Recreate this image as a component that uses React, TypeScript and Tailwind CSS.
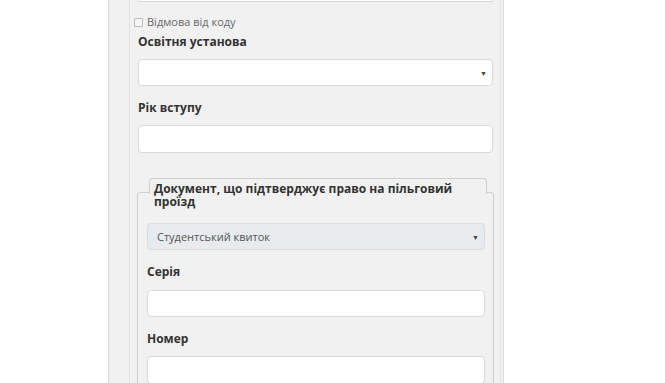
import { useState } from "react";

const font = { fontFamily: '"Open Sans", "Noto Sans", sans-serif' };

function Arrow() {
  return <span className="pointer-events-none absolute right-[5px] top-[10px] text-[7px] leading-none text-[#444]">▼</span>;
}

export default function App() {
  const [noCode, setNoCode] = useState(false);

  return (
    <div className="h-[383px] w-[665px] overflow-hidden bg-white" style={font}>
      <div className="ml-[108px] h-full w-[396px] border-x border-[#dcdcdc] bg-[#f1f1f1]">
        <div className="ml-[20px] h-full w-[372px] border-x border-[#e2e2e2] pl-[8px] pr-[7px]">
          {/* bottom edge of the previous field */}
          <div className="h-[2px] w-[355px] rounded-b border-x border-b border-[#d6d6d6] bg-white" />

          <label className="-ml-[4px] mt-[15px] flex h-[11px] items-center gap-[4px] text-[11px] text-[#6a6a6a]">
            <input
              type="checkbox"
              checked={noCode}
              onChange={(e) => setNoCode(e.target.checked)}
              className="h-[9px] w-[9px] appearance-none rounded-[1px] border border-[#bdbdbd] bg-[#f4f4f4]"
            />
            Відмова від коду
          </label>

          <div className="mt-[5px] h-[18px] text-[12px] font-bold leading-[18px] text-[#333]">Освітня установа</div>
          <div className="relative mt-[8px] h-[27px] w-[355px] rounded border border-[#dadada] bg-white">
            <Arrow />
          </div>

          <div className="mt-[13px] h-[18px] text-[12px] font-bold leading-[18px] text-[#333]">Рік вступу</div>
          <div className="mt-[8px] h-[28px] w-[355px] rounded border border-[#dadada] bg-white" />

          {/* fieldset */}
          <div className="relative mt-[25px] ml-[-1px] w-[357px] pt-[14px]">
            <div className="h-[200px] rounded-t border-x border-t border-[#cfcfcf] px-[9px] pt-[30px]">
              <div className="relative h-[27px] w-[338px] rounded border border-[#d9dde1] bg-[#e8ebee] pl-[9px] text-[11px] leading-[25px] text-[#555]">
                Студентський квиток
                <Arrow />
              </div>
              <div className="mt-[13px] h-[18px] text-[12px] font-bold leading-[18px] text-[#333]">Серія</div>
              <div className="mt-[9px] h-[27px] w-[338px] rounded border border-[#dadada] bg-white" />
              <div className="mt-[13px] h-[18px] text-[12px] font-bold leading-[18px] text-[#333]">Номер</div>
              <div className="mt-[8px] h-[28px] w-[338px] rounded border border-[#dadada] bg-white" />
            </div>
            <div className="absolute left-[12px] top-0 h-[16px] w-[338px] rounded-t border-x border-t border-[#cfcfcf] bg-[#f1f1f1] px-[4px] pt-[3px] text-[12px] font-bold leading-[13px] text-[#333]">
              Документ, що підтверджує право на пільговий
              <br />
              проїзд
            </div>
          </div>
        </div>
      </div>
    </div>
  );
}
